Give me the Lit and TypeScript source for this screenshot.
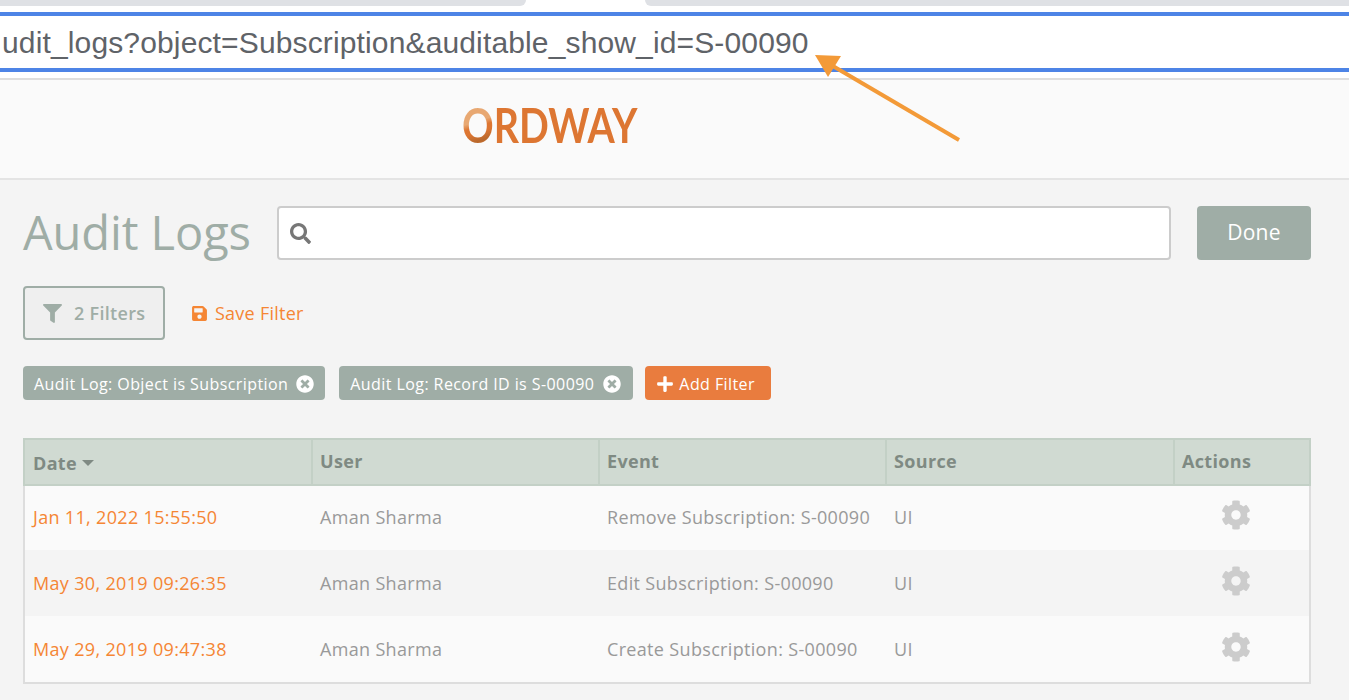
import { LitElement, css, html, svg } from 'lit'
import { customElement } from 'lit/decorators.js'

const ICONS = {
  search: ['0 0 512 512', 'M505 442.700L405.300 343c-4.500-4.500-10.600-7-17-7H372c27.600-35.300 44-79.700 44-128C416 93.100 322.900 0 208 0S0 93.100 0 208s93.100 208 208 208c48.300 0 92.700-16.400 128-44v16.300c0 6.400 2.500 12.500 7 17l99.700 99.700c9.400 9.400 24.600 9.400 33.900 0l28.300-28.300c9.400-9.400 9.400-24.600.1-34zM208 336c-70.700 0-128-57.200-128-128 0-70.700 57.200-128 128-128 70.700 0 128 57.200 128 128 0 70.700-57.200 128-128 128z'],
  filter: ['0 0 512 512', 'M487.976 0H24.028C2.710 0-8.047 25.866 7.058 40.971L192 225.941V432c0 7.831 3.821 15.170 10.237 19.662l80 55.980C298.020 518.690 320 507.493 320 487.980V225.941l184.947-184.970C520.021 25.896 509.338 0 487.976 0z'],
  save: ['0 0 448 512', 'M433.941 129.941l-83.882-83.882A48 48 0 0 0 316.118 32H48C21.490 32 0 53.490 0 80v352c0 26.510 21.490 48 48 48h352c26.510 0 48-21.490 48-48V163.882a48 48 0 0 0-14.059-33.941zM224 416c-35.346 0-64-28.654-64-64 0-35.346 28.654-64 64-64s64 28.654 64 64c0 35.346-28.654 64-64 64zm96-304.520V212c0 6.627-5.373 12-12 12H76c-6.627 0-12-5.373-12-12V108c0-6.627 5.373-12 12-12h228.520c3.183 0 6.235 1.264 8.485 3.515l3.480 3.480A11.996 11.996 0 0 1 320 111.480z'],
  close: ['0 0 512 512', 'M256 8C119 8 8 119 8 256s111 248 248 248 248-111 248-248S393 8 256 8zm121.600 313.100c4.700 4.700 4.700 12.300 0 17L338 377.600c-4.700 4.700-12.300 4.700-17 0L256 312l-65.100 65.600c-4.700 4.700-12.300 4.700-17 0L134.400 338c-4.700-4.700-4.700-12.300 0-17l65.600-65-65.600-65.100c-4.700-4.700-4.700-12.300 0-17l39.600-39.600c4.700-4.700 12.300-4.700 17 0l65 65.700 65.100-65.600c4.700-4.700 12.300-4.700 17 0l39.600 39.600c4.700 4.700 4.700 12.300 0 17L312 256l65.600 65.100z'],
  plus: ['0 0 448 512', 'M416 208H272V64c0-17.670-14.330-32-32-32h-32c-17.670 0-32 14.330-32 32v144H32c-17.670 0-32 14.330-32 32v32c0 17.670 14.330 32 32 32h144v144c0 17.670 14.330 32 32 32h32c17.670 0 32-14.330 32-32V304h144c17.670 0 32-14.330 32-32v-32c0-17.670-14.330-32-32-32z'],
  cog: ['0 0 512 512', 'M487.400 315.700l-42.600-24.600c4.300-23.200 4.300-47 0-70.200l42.600-24.600c4.900-2.800 7.100-8.600 5.500-14-11.100-35.600-30-67.800-54.700-94.600-3.800-4.100-10-5.100-14.800-2.300L380.800 110c-17.900-15.400-38.500-27.300-60.800-35.100V25.800c0-5.600-3.900-10.500-9.400-11.700-36.700-8.200-74.300-7.800-109.200 0-5.500 1.200-9.400 6.100-9.400 11.700V75c-22.200 7.900-42.800 19.800-60.800 35.100L88.700 85.500c-4.900-2.800-11-1.900-14.800 2.300-24.700 26.700-43.600 58.900-54.700 94.600-1.700 5.400.6 11.200 5.500 14L67.300 221c-4.300 23.200-4.300 47 0 70.200l-42.600 24.600c-4.900 2.800-7.100 8.600-5.500 14 11.100 35.600 30 67.800 54.700 94.600 3.800 4.100 10 5.100 14.800 2.300l42.600-24.600c17.900 15.400 38.500 27.300 60.800 35.100v49.200c0 5.600 3.900 10.500 9.400 11.700 36.700 8.200 74.300 7.800 109.200 0 5.500-1.200 9.400-6.100 9.400-11.700v-49.200c22.200-7.900 42.800-19.800 60.800-35.100l42.600 24.600c4.900 2.800 11 1.900 14.800-2.300 24.700-26.700 43.600-58.900 54.700-94.600 1.500-5.500-.7-11.300-5.600-14.100zM256 336c-44.100 0-80-35.900-80-80s35.900-80 80-80 80 35.900 80 80-35.900 80-80 80z']
}

const icon = (name: keyof typeof ICONS, size: number) => {
  const [box, d] = ICONS[name]
  return html`<svg class="icon" width=${size} height=${size} viewBox=${box} fill="currentColor">${svg`<path d=${d}></path>`}</svg>`
}

const ROWS = [
  { date: 'Jan 11, 2022 15:55:50', event: 'Remove Subscription: S-00090' },
  { date: 'May 30, 2019 09:26:35', event: 'Edit Subscription: S-00090' },
  { date: 'May 29, 2019 09:47:38', event: 'Create Subscription: S-00090' }
]

@customElement('app-root')
export class AppRoot extends LitElement {
  static styles = css`
    :host {
      display: block;
      position: relative;
      width: 1349px;
      height: 700px;
      overflow: hidden;
      background: #f4f4f4;
      font-family: 'Open Sans', sans-serif;
      color: #999;
    }
    .icon { display: block; flex: none; }

    .tabs {
      display: flex;
      justify-content: space-between;
      height: 12px;
      background: #fff;
    }
    .tab { width: 526px; height: 6px; background: #dfe1e5; border-bottom-right-radius: 8px; }
    .tab.right { width: 704px; border-bottom-right-radius: 0; border-bottom-left-radius: 8px; }
    .url {
      height: 52px;
      border-top: 4px solid #4d84e6;
      border-bottom: 4px solid #4d84e6;
      background: #fff;
      font: 30px/53px 'Liberation Sans', Arial, sans-serif;
      letter-spacing: 0.14px;
      color: #5f6368;
      white-space: nowrap;
      overflow: hidden;
      padding-left: 2px;
    }
    .gap { height: 6px; background: #fff; border-bottom: 2px solid #dedede; }
    .brand {
      display: flex;
      align-items: center;
      height: 98px;
      padding-left: 462px;
      background: #fafafa;
      border-bottom: 2px solid #e4e4e4;
    }
    .logo {
      display: flex;
      margin-bottom: 8px;
      font: 700 47px/1 Lato, sans-serif;
      color: #dd7632;
      white-space: nowrap;
      transform: scaleX(0.835);
      transform-origin: left center;
    }
    .ring {
      background: linear-gradient(165deg, #e8a872 0 42%, #dd7632 52%, #dd7632 62%, #b8682c 78%, #dd7632 92%);
      -webkit-background-clip: text;
      background-clip: text;
      color: transparent;
    }

    .content { padding: 26px 38px 0 23px; }
    .top { display: flex; align-items: stretch; height: 54px; }
    h1 {
      margin: 0;
      width: 254px;
      font-size: 47px;
      font-weight: 400;
      letter-spacing: -0.1px;
      line-height: 52px;
      color: #9fada6;
      white-space: nowrap;
    }
    .search {
      display: flex;
      align-items: center;
      flex: 1;
      padding-left: 11px;
      background: #fff;
      border: 2px solid #ccc;
      border-radius: 4px;
      color: #777;
    }
    .done {
      width: 114px;
      margin-left: 26px;
      border-radius: 4px;
      background: #9fada6;
      color: #fff;
      font-size: 21px;
      letter-spacing: 0.3px;
      line-height: 53px;
      text-align: center;
    }

    .tools { display: flex; align-items: center; gap: 26px; margin-top: 26px; }
    .filters {
      display: flex;
      align-items: center;
      gap: 12px;
      box-sizing: border-box;
      width: 142px;
      height: 54px;
      padding-left: 18px;
      border: 2px solid #9fada6;
      border-radius: 4px;
      background: #efefef;
      color: #9fada6;
      font-size: 18px;
      font-weight: 600;
      letter-spacing: 0.3px;
    }
    .save { display: flex; align-items: center; gap: 7px; color: #f58634; font-size: 18px; letter-spacing: 0.25px; }

    .chips { display: flex; gap: 14px; margin-top: 26px; }
    .chip {
      display: flex;
      align-items: center;
      gap: 8px;
      box-sizing: border-box;
      height: 34px;
      padding: 2px 11px 0;
      border-radius: 4px;
      background: #9fada6;
      color: #fff;
      font-size: 16px;
      letter-spacing: 0.42px;
      white-space: nowrap;
    }
    .chip.record { gap: 9px; padding-right: 12px; }
    .chip.add { gap: 5px; margin-left: -2px; padding-right: 16px; background: #e97c3e; }

    .table { margin-top: 38px; border: 2px solid #ddd; border-top: 0; background: #fafafa; }
    .row { display: grid; grid-template-columns: 287px 287px 287px 288px 1fr; height: 66px; }
    .row > div { display: flex; align-items: center; padding-left: 8px; font-size: 18px; letter-spacing: 0.33px; color: #999; }
    .row.even { background: #f4f4f4; }
    .row.first { height: 64px; }
    .row.first > div { padding-bottom: 2px; }
    .row .date { color: #f58634; }
    .row .actions { justify-content: center; padding: 0 12px 4px 0; color: #ccc; }
    .row.first .actions { padding-bottom: 6px; }
    .head {
      height: 48px;
      box-sizing: border-box;
      margin: 0 -2px;
      background: #d0dad2;
      border: 2px solid #c3d0c6;
      grid-template-columns: 286px 287px 287px 288px 1fr;
    }
    .head > div {
      padding: 0 0 2px 7px;
      border-left: 2px solid #c3d0c6;
      color: #7f8a83;
      font-weight: 700;
      gap: 5px;
    }
    .head > div:first-child { border-left: 0; padding: 2px 0 0 8px; }
    .caret { width: 0; height: 0; border: 6px solid transparent; border-top-color: #7f8a83; border-bottom: 0; }

    .arrow { position: absolute; left: 800px; top: 40px; }
  `

  render () {
    return html`
      <div class="tabs"><div class="tab"></div><div class="tab right"></div></div>
      <div class="url">udit_logs?object=Subscription&auditable_show_id=S-00090</div>
      <div class="gap"></div>
      <div class="brand">
        <div class="logo"><span class="ring">O</span><span>RDWAY</span></div>
      </div>

      <div class="content">
        <div class="top">
          <h1>Audit Logs</h1>
          <div class="search">${icon('search', 21)}</div>
          <div class="done">Done</div>
        </div>

        <div class="tools">
          <div class="filters">${icon('filter', 19)}2 Filters</div>
          <div class="save">${icon('save', 17)}Save Filter</div>
        </div>

        <div class="chips">
          <div class="chip">Audit Log: Object is Subscription ${icon('close', 18)}</div>
          <div class="chip record">Audit Log: Record ID is S-00090 ${icon('close', 18)}</div>
          <div class="chip add">${icon('plus', 18)}Add Filter</div>
        </div>

        <div class="table">
          <div class="row head">
            <div>Date <span class="caret"></span></div>
            <div>User</div>
            <div>Event</div>
            <div>Source</div>
            <div>Actions</div>
          </div>
          ${ROWS.map((row, i) => html`
            <div class="row ${i === 0 ? 'first' : ''} ${i === 1 ? 'even' : ''}">
              <div class="date">${row.date}</div>
              <div>Aman Sharma</div>
              <div>${row.event}</div>
              <div>UI</div>
              <div class="actions">${icon('cog', 30)}</div>
            </div>
          `)}
        </div>
      </div>

      <svg class="arrow" width="170" height="110" viewBox="800 40 170 110">
        <line x1="959" y1="140" x2="826" y2="62" stroke="#f39a38" stroke-width="4"></line>
        <polygon points="815,55 841,56 828,77" fill="#f39a38"></polygon>
      </svg>
    `
  }
}
